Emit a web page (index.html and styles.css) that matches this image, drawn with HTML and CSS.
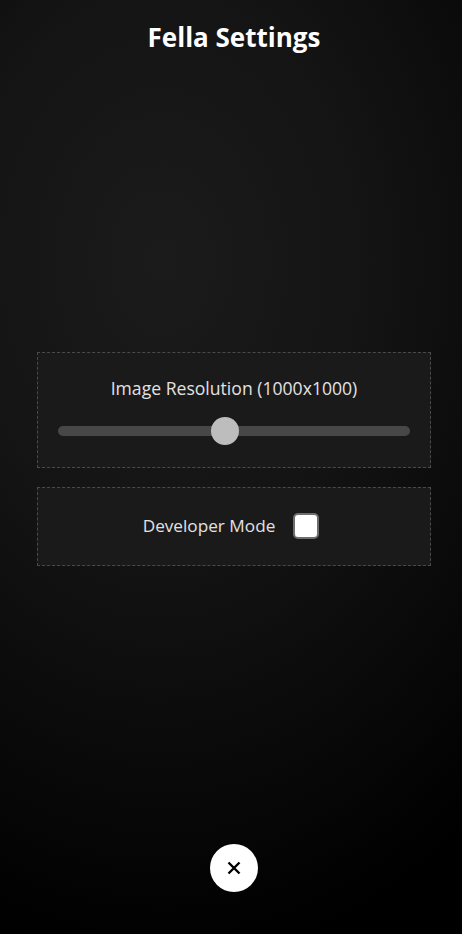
FILE: index.html
```html
<!DOCTYPE html>
<html lang="en">
<head>
<meta charset="utf-8">
<title>Fella Settings</title>
<link rel="stylesheet" href="styles.css">
</head>
<body>
<div class="screen">
  <h1 class="title">Fella Settings</h1>
  <div class="panels">
    <section class="panel panel-slider">
      <div class="label">Image Resolution (1000x1000)</div>
      <div class="slider">
        <div class="track"></div>
        <div class="thumb" style="left: 47.4%"></div>
      </div>
    </section>
    <section class="panel panel-check">
      <span class="label">Developer Mode</span>
      <span class="checkbox"></span>
    </section>
  </div>
  <button class="close" aria-label="Close">
    <svg width="16" height="16" viewBox="0 0 16 16"><path d="M2.5 2.5 L13.5 13.5 M13.5 2.5 L2.5 13.5" stroke="#000" stroke-width="2.4" stroke-linecap="butt" fill="none"/></svg>
  </button>
</div>
</body>
</html>
```
FILE: styles.css
```css
html, body {
  margin: 0;
  padding: 0;
  height: 100%;
}
body {
  background: radial-gradient(ellipse 110% 75% at 35% 28%, #1b1b1b 0%, #141414 40%, #070707 80%, #000 100%);
  font-family: "Open Sans", "Noto Sans", sans-serif;
  color: #e2e2e2;
}
.screen {
  height: 934px;
  box-sizing: border-box;
  padding-left: 6px;
  display: flex;
  flex-direction: column;
  align-items: center;
}
.title {
  margin: 0;
  padding-top: 20px;
  font-size: 26px;
  line-height: 34px;
  font-weight: 700;
  color: #fff;
  letter-spacing: 0;
}
.panels {
  margin-top: 298px;
  width: 394px;
  display: flex;
  flex-direction: column;
  gap: 19px;
}
.panel {
  border: 1px dashed #4a4a4a;
  background: #1a1a1a;
  box-sizing: border-box;
}
.panel-slider {
  padding: 23px 20px 22px;
  display: flex;
  flex-direction: column;
  align-items: center;
  gap: 17px;
}
.label {
  font-size: 17.6px;
  line-height: 24px;
  color: #e2e2e2;
}
.slider {
  position: relative;
  width: 100%;
  height: 28px;
}
.track {
  position: absolute;
  left: 0;
  right: 0;
  top: 9px;
  height: 10px;
  border-radius: 5px;
  background: #474747;
}
.thumb {
  position: absolute;
  top: 0;
  width: 28px;
  height: 28px;
  margin-left: -14px;
  border-radius: 50%;
  background: #bdbdbd;
}
.panel-check {
  padding: 25px 26px 26px 20px;
  display: flex;
  justify-content: center;
  align-items: center;
  gap: 18px;
}
.panel-check .label {
  font-size: 17.2px;
  line-height: 26px;
}
.checkbox {
  width: 26px;
  height: 26px;
  box-sizing: border-box;
  border: 2px solid #6e6e6e;
  border-radius: 5px;
  background: #fff;
}
.close {
  margin-top: 278px;
  width: 48px;
  height: 48px;
  border: none;
  border-radius: 50%;
  background: #fff;
  padding: 0;
  display: flex;
  align-items: center;
  justify-content: center;
}
```
